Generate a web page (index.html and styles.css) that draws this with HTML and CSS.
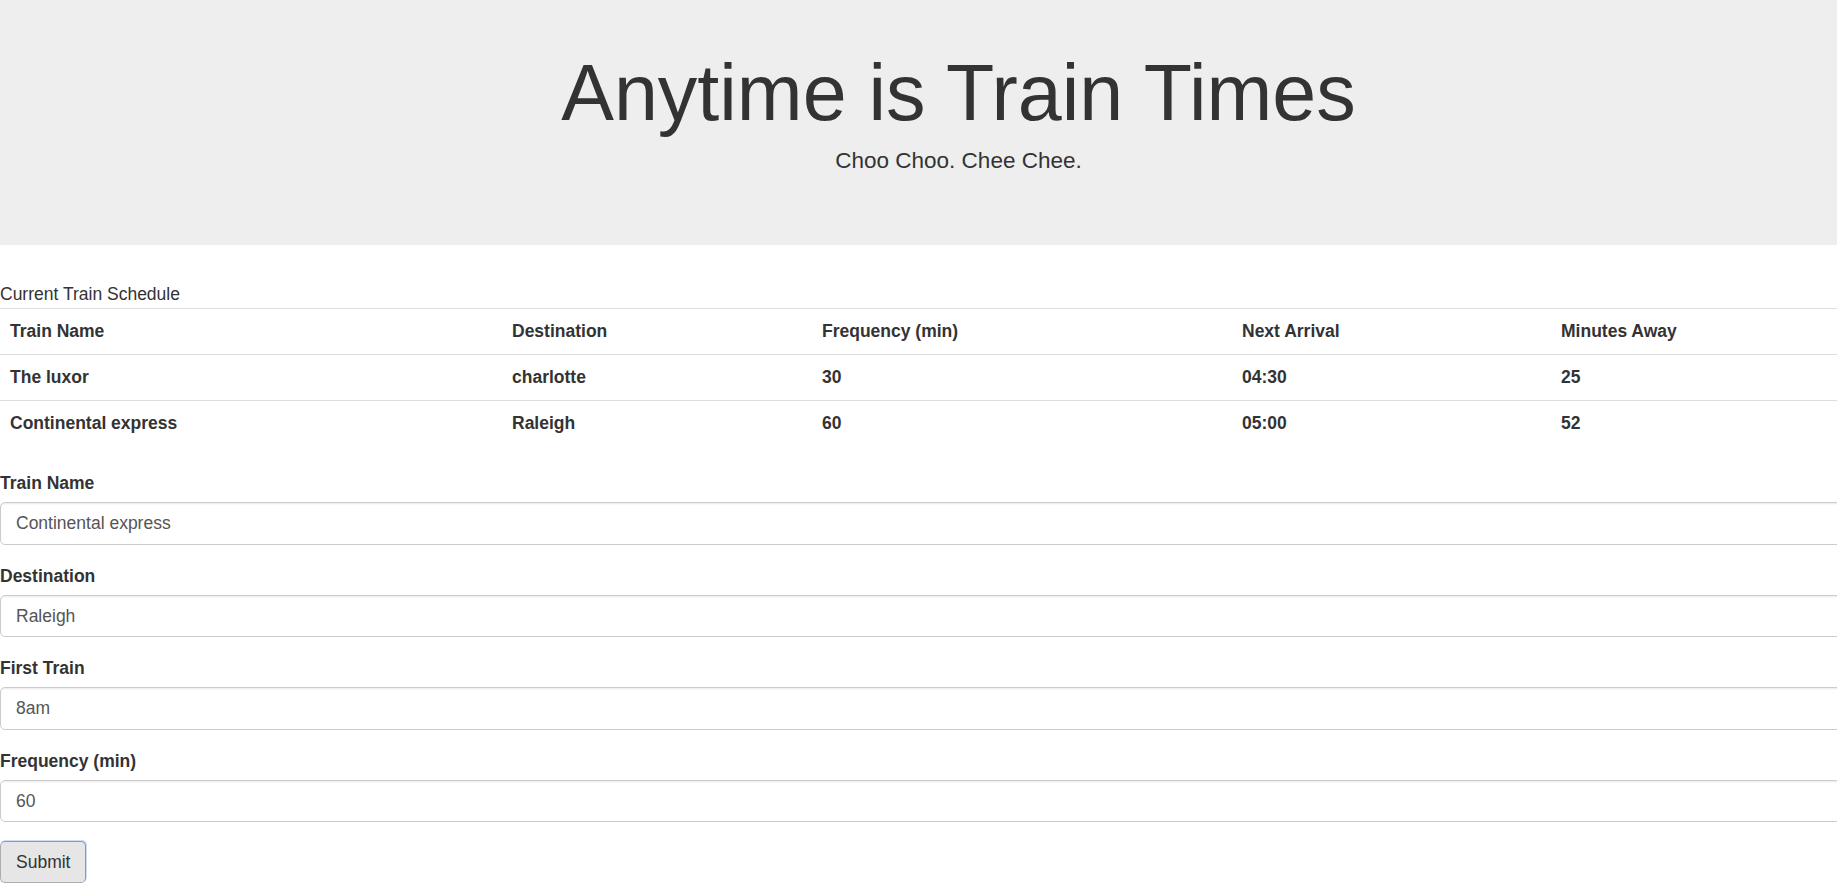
FILE: index.html
```html
<!DOCTYPE html>
<html lang="en">
<head>
<meta charset="utf-8">
<title>Anytime is Train Times</title>
<link rel="stylesheet" href="styles.css">
</head>
<body>
<div class="page">
  <header class="jumbotron">
    <h1 class="title">Anytime is Train Times</h1>
    <h4 class="subtitle">Choo Choo. Chee Chee.</h4>
  </header>

  <table class="schedule">
    <caption class="schedule-caption">Current Train Schedule</caption>
    <colgroup>
      <col class="c-name">
      <col class="c-dest">
      <col class="c-freq">
      <col class="c-next">
      <col class="c-away">
    </colgroup>
    <thead>
      <tr>
        <th>Train Name</th>
        <th>Destination</th>
        <th>Frequency (min)</th>
        <th>Next Arrival</th>
        <th>Minutes Away</th>
      </tr>
    </thead>
    <tbody>
      <tr>
        <td>The luxor</td>
        <td>charlotte</td>
        <td>30</td>
        <td>04:30</td>
        <td>25</td>
      </tr>
      <tr>
        <td>Continental express</td>
        <td>Raleigh</td>
        <td>60</td>
        <td>05:00</td>
        <td>52</td>
      </tr>
    </tbody>
  </table>

  <form class="train-form">
    <div class="form-group">
      <label class="form-label" for="name">Train Name</label>
      <input class="form-control" id="name" type="text" value="Continental express">
    </div>
    <div class="form-group">
      <label class="form-label" for="dest">Destination</label>
      <input class="form-control" id="dest" type="text" value="Raleigh">
    </div>
    <div class="form-group">
      <label class="form-label" for="first">First Train</label>
      <input class="form-control" id="first" type="text" value="8am">
    </div>
    <div class="form-group">
      <label class="form-label" for="freq">Frequency (min)</label>
      <input class="form-control" id="freq" type="text" value="60">
    </div>
    <button class="btn" type="button">Submit</button>
  </form>
</div>
</body>
</html>
```

FILE: styles.css
```css
html, body {
  margin: 0;
  padding: 0;
  overflow: hidden;
  background: #fff;
}

body {
  font-family: "Liberation Sans", Arial, Helvetica, sans-serif;
  font-size: 17.5px;
  line-height: 25px;
  color: #333;
}

.page {
  width: 1917px;
}

.jumbotron {
  background: #eee;
  padding: 50px 0 58.5px;
  margin: 0 0 37px;
  text-align: center;
}

.title {
  margin: 0 0 12.5px;
  font-size: 79px;
  font-weight: 400;
  line-height: 1.1;
  color: #333;
}

.subtitle {
  margin: 0 0 12.5px;
  font-size: 22.5px;
  font-weight: 400;
  line-height: 1.1;
  color: #333;
}

.schedule {
  width: 100%;
  table-layout: fixed;
  border-collapse: collapse;
  border-spacing: 0;
  margin: 0 0 25px;
}

.schedule-caption {
  caption-side: top;
  text-align: left;
  padding: 0 0 1px;
  color: #333;
  line-height: 25px;
}

.c-name { width: 502px; }
.c-dest { width: 310px; }
.c-freq { width: 420px; }
.c-next { width: 319px; }
.c-away { width: auto; }

.schedule th,
.schedule td {
  padding: 10px;
  border-top: 1px solid #ddd;
  text-align: left;
  font-weight: 700;
  line-height: 25px;
  vertical-align: top;
}

.train-form {
  margin: 0;
}

.form-group {
  margin-bottom: 18.75px;
}

.form-label {
  display: inline-block;
  margin-bottom: 6.25px;
  font-weight: 700;
  max-width: 100%;
}

.form-control {
  display: block;
  box-sizing: border-box;
  width: 100%;
  height: 42.5px;
  padding: 7.5px 15px;
  font-family: inherit;
  font-size: 17.5px;
  line-height: 25px;
  color: #555;
  background: #fff;
  border: 1px solid #ccc;
  border-radius: 5px;
  box-shadow: inset 0 1.25px 1.25px rgba(0, 0, 0, 0.075);
  margin: 0;
}

.btn {
  display: inline-block;
  box-sizing: border-box;
  height: 42px;
  padding: 7.5px 15px;
  font-family: inherit;
  font-size: 17.5px;
  line-height: 25px;
  color: #333;
  background: #e6e6e6;
  border: 1px solid #adadad;
  border-top-color: #6d9de3;
  border-right-color: #6d9de3;
  border-radius: 5px;
  box-shadow: 1px -1px 0 rgba(109, 157, 227, 0.35);
  margin: 0;
  cursor: pointer;
}
```
